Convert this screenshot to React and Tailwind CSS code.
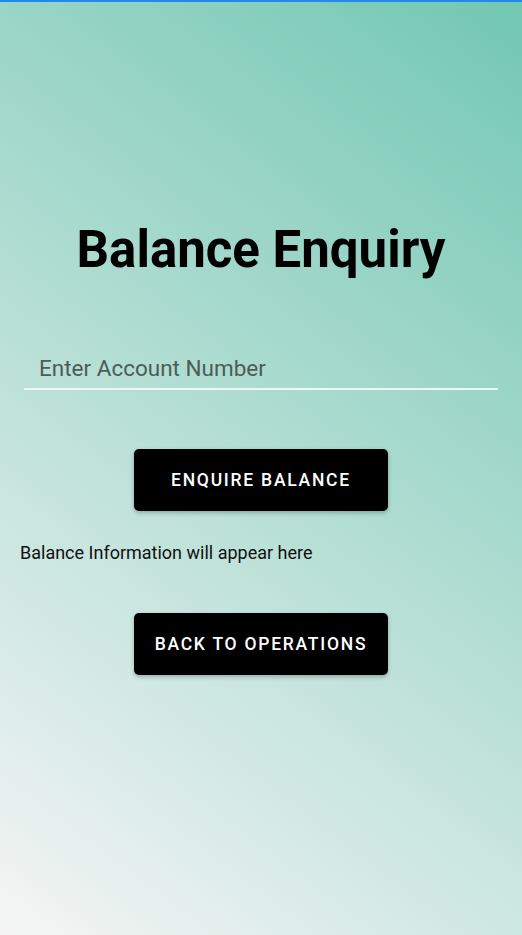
import React, { useState } from 'react';

export default function App() {
  const [account, setAccount] = useState('');

  return (
    <div
      className="min-h-screen w-full flex flex-col bg-[linear-gradient(37deg,#f5f5f5,#72c7b3)]"
      style={{ fontFamily: 'Roboto, "Noto Sans", sans-serif' }}
    >
      <div className="h-[2px] bg-[#2189ee]" />

      <h1 className="mt-[218px] text-center text-[51px] leading-[60px] font-bold text-black">
        Balance Enquiry
      </h1>

      <div className="mx-[24px] mt-[63px] border-b-2 border-[#eef7f4]">
        <input
          value={account}
          onChange={(e) => setAccount(e.target.value)}
          placeholder="Enter Account Number"
          className="w-full h-[45px] bg-transparent pt-[4px] pl-[15px] text-[22.5px] text-[#222] placeholder:text-[#4d5c59] focus:outline-none"
        />
      </div>

      <div className="flex justify-center mt-[59px]">
        <button className="w-[254px] h-[62px] bg-black text-white rounded-[5px] text-[17.5px] font-medium tracking-[0.1em] shadow-[0_2px_4px_rgba(0,0,0,0.25)]">
          ENQUIRE BALANCE
        </button>
      </div>

      <p className="mt-[30px] ml-[20px] text-[18px] leading-[24px] text-[#111]">
        Balance Information will appear here
      </p>

      <div className="flex justify-center mt-[48px]">
        <button className="w-[254px] h-[62px] bg-black text-white rounded-[5px] text-[17.5px] font-medium tracking-[0.1em] shadow-[0_2px_4px_rgba(0,0,0,0.25)]">
          BACK TO OPERATIONS
        </button>
      </div>
    </div>
  );
}
